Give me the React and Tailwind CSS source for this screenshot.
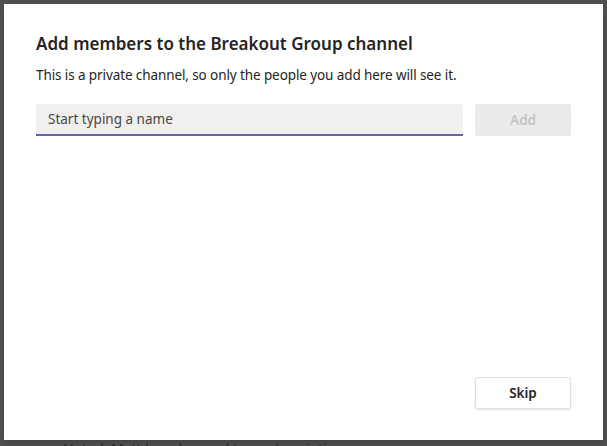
export default function App() {
  return (
    <div className="relative h-[446px] w-[607px] overflow-hidden bg-[#4f4f4f] font-['Noto_Sans','Open_Sans',sans-serif]">
      {/* page behind the dialog */}
      <div className="absolute left-[16px] top-[438px] flex gap-[22px] text-[14px] text-[#2a2a2a]">
        <span>ago</span>
        <span>Noted, Matt has changed team description.</span>
      </div>
      <div className="absolute left-[4px] top-[4px] flex h-[436px] w-[599px] flex-col bg-white px-[32px] pt-[28px] pb-[31px] shadow-md">
        <h1 className="text-[17px] font-semibold leading-[24px] text-[#252423]">
          Add members to the Breakout Group channel
        </h1>
        <p className="mt-[9px] text-[13.5px] leading-[20px] tracking-[-0.1px] text-[#252423]">
          This is a private channel, so only the people you add here will see it.
        </p>
        <div className="mt-[19px] flex gap-[12px]">
          <input
            type="text"
            placeholder="Start typing a name"
            className="h-[32px] w-[428px] rounded-t-[3px] border-b-2 border-[#6264a7] bg-[#f1f0ef] px-[12px] text-[13.5px] text-[#252423] outline-none placeholder:text-[#484644]"
          />
          <button className="h-[32px] w-[96px] rounded-[3px] bg-[#ebebeb] text-[13.5px] font-semibold text-[#c4c4c4]">
            Add
          </button>
        </div>
        <div className="mt-auto flex justify-end">
          <button className="h-[32px] w-[96px] rounded-[3px] border border-[#e1dfdd] bg-white text-[13.5px] font-semibold text-[#252423] shadow-[0_1px_2px_rgba(0,0,0,0.12)]">
            Skip
          </button>
        </div>
      </div>
    </div>
  );
}
